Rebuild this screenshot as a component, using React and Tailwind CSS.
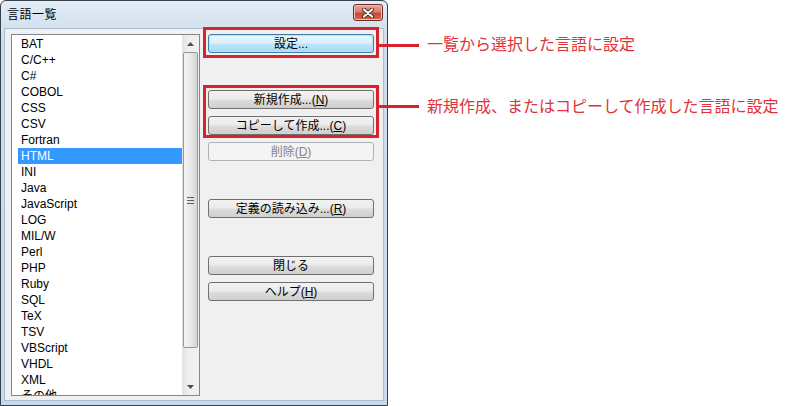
import React from 'react';

const languages = [
    'BAT', 'C/C++', 'C#', 'COBOL', 'CSS', 'CSV', 'Fortran', 'HTML', 'INI', 'Java',
    'JavaScript', 'LOG', 'MIL/W', 'Perl', 'PHP', 'Ruby', 'SQL', 'TeX', 'TSV',
    'VBScript', 'VHDL', 'XML', 'その他',
];

const font = "font-['Liberation_Sans','Noto_Sans_CJK_JP',sans-serif]";

const Button = ({ children, variant = 'normal', className = '' }) => {
    const styles = {
        normal: 'border-[#707070] bg-[linear-gradient(#f2f2f2_0%,#ebebeb_48%,#dddddd_52%,#cfcfcf_100%)] text-black',
        primary: 'border-[#3c7fb1] bg-[linear-gradient(#eaf6fd_0%,#d9f0fc_48%,#bee6fd_52%,#a7d9f5_100%)] text-black shadow-[inset_0_0_0_1px_#b8e2f8]',
        disabled: 'border-[#adb2b5] bg-[#f4f4f4] text-[#838383]',
    };
    return (
        <div className={`h-[19px] w-[166px] rounded-[3px] border flex items-center justify-center text-[12px] leading-none ${styles[variant]} ${className}`}>
            <span className="shadow-[inset_0_1px_0_#ffffff00]">{children}</span>
        </div>
    );
};

const Callout = ({ top }) => (
    <div className={`absolute left-[calc(100%+3px)] w-[40px] h-[3px] bg-[#d9222a]`} style={{ top }} />
);

const ScrollArrow = ({ up }) => (
    <div className="h-[17px] flex items-center justify-center">
        <svg width="7" height="4" viewBox="0 0 7 4">
            {up ? <path d="M3.5 0 L7 4 L0 4 Z" fill="#4d4d4d" /> : <path d="M0 0 L7 0 L3.5 4 Z" fill="#4d4d4d" />}
        </svg>
    </div>
);

export default function App() {
    return (
        <div className={`w-[800px] h-[406px] bg-white flex overflow-hidden ${font}`}>
            {/* Dialog window */}
            <div className="w-[388px] h-[406px] shrink-0 flex flex-col border border-[#34404c] rounded-t-[6px] bg-[linear-gradient(#e4ecf6,#cfdcec_40px,#c9d8ea)]">
                {/* Title bar */}
                <div className="h-[27px] flex items-center justify-between pl-[6px] pr-[4px]">
                    <span className="text-[12px] text-black tracking-[0.5px]">言語一覧</span>
                    <div className="w-[30px] h-[17px] mt-[-4px] rounded-[3px] border border-[#6e2b23] bg-[linear-gradient(#e9a899_0%,#d77e6d_45%,#c44a36_55%,#d06a52_100%)] shadow-[inset_0_0_0_1px_#f0c2b5] flex items-center justify-center">
                        <svg width="12" height="10" viewBox="0 0 12 10">
                            <path d="M2 1.5 L10 8.5 M10 1.5 L2 8.5" stroke="#4a2a25" strokeWidth="4" strokeLinecap="round" />
                            <path d="M2 1.5 L10 8.5 M10 1.5 L2 8.5" stroke="#ffffff" strokeWidth="2.2" strokeLinecap="round" />
                        </svg>
                    </div>
                </div>

                {/* Client area */}
                <div className="flex-1 mx-[3px] mb-[4px] bg-[#f0f0f0] border border-[#a9bdd3] flex pl-[6px] pt-[5px]">
                    {/* List box */}
                    <div className="w-[189px] h-[362px] border border-[#828790] bg-white flex overflow-hidden">
                        <div className="flex-1 pl-[6px] pt-[1px] overflow-hidden">
                            {languages.map((lang) => (
                                <div
                                    key={lang}
                                    className={`h-[16px] pl-[3px] text-[12px] leading-[16px] ${lang === 'HTML' ? 'bg-[#3399ff] text-white' : 'text-black'}`}
                                >
                                    {lang}
                                </div>
                            ))}
                        </div>
                        {/* Scrollbar */}
                        <div className="w-[17px] flex flex-col bg-[linear-gradient(90deg,#e3e3e3,#f0f0f0_40%,#f0f0f0)]">
                            <ScrollArrow up />
                            <div className="h-[296px] mx-[1px] rounded-[2px] border border-[#979797] bg-[linear-gradient(90deg,#f4f4f4,#e8e8e8_50%,#d6d6d6)] flex items-center justify-center">
                                <div className="flex flex-col gap-[2px]">
                                    <div className="w-[7px] h-[1px] bg-[#5d5d5d]" />
                                    <div className="w-[7px] h-[1px] bg-[#5d5d5d]" />
                                    <div className="w-[7px] h-[1px] bg-[#5d5d5d]" />
                                </div>
                            </div>
                            <div className="flex-1" />
                            <ScrollArrow />
                        </div>
                    </div>

                    {/* Buttons */}
                    <div className="w-[176px] ml-[3px] flex flex-col">
                        <div className="relative mt-[-7px] h-[31px] border-[3px] border-[#d9222a] px-[2px] pt-[4px]">
                            <Button variant="primary">設定...</Button>
                            <Callout top={14} />
                        </div>
                        <div className="relative mt-[27px] h-[53px] border-[3px] border-[#d9222a] px-[2px] pt-[2px] flex flex-col gap-[7px]">
                            <Button>新規作成...(<u>N</u>)</Button>
                            <Button>コピーして作成...(<u>C</u>)</Button>
                            <Callout top={17} />
                        </div>
                        <Button variant="disabled" className="mt-[4px] ml-[5px]">削除(<u>D</u>)</Button>
                        <Button className="mt-[38px] ml-[5px]">定義の読み込み...(<u>R</u>)</Button>
                        <Button className="mt-[38px] ml-[5px]">閉じる</Button>
                        <Button className="mt-[7px] ml-[5px]">ヘルプ(<u>H</u>)</Button>
                    </div>
                </div>
            </div>

            {/* Annotations */}
            <div className="flex flex-col pl-[39px] pt-[35px] text-[16px] leading-[20px] text-[#e0323a] whitespace-nowrap">
                <div>一覧から選択した言語に設定</div>
                <div className="mt-[42px]">新規作成、またはコピーして作成した言語に設定</div>
            </div>
        </div>
    );
}
